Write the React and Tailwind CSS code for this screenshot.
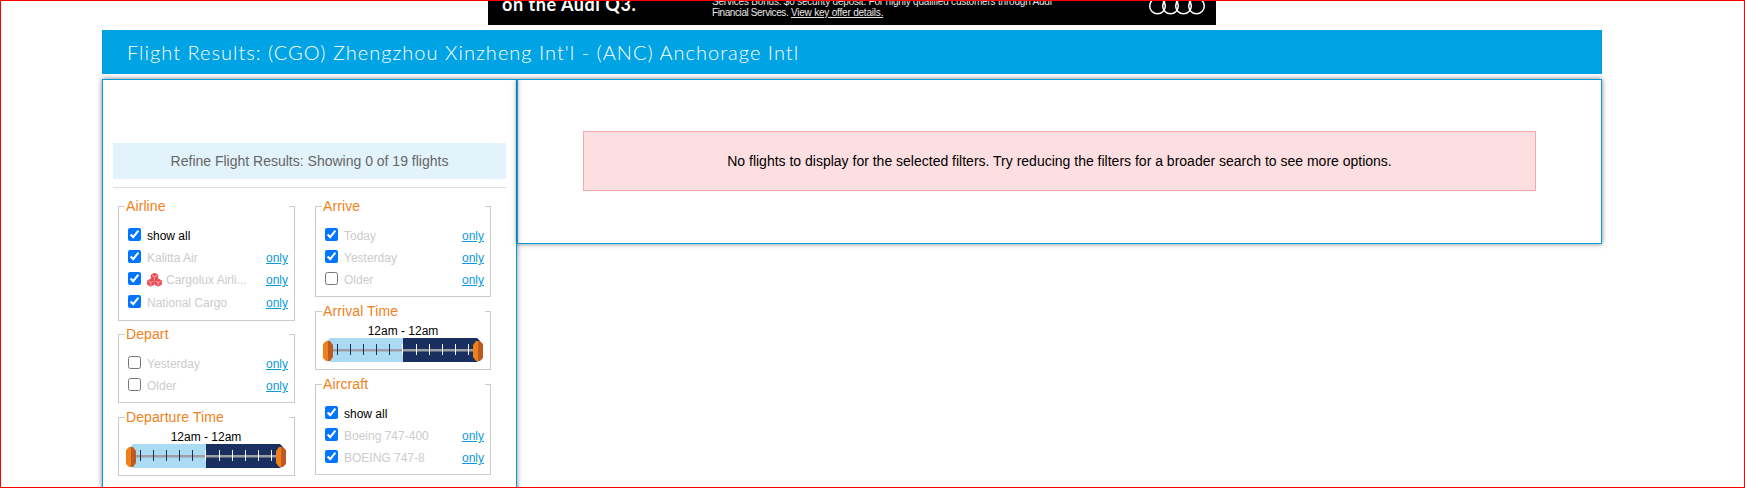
const FONT = { fontFamily: '"Liberation Sans", Arial, sans-serif' };

function CargoluxLogo() {
  const cells = [
    [7.5, 3.8],
    [3.8, 9.6],
    [11.2, 9.6],
  ];
  return (
    <svg width="15" height="14" viewBox="0 0 15 14" className="-mt-[1px] shrink-0">
      {cells.map(([x, y]) => (
        <g key={x + "-" + y} transform={"translate(" + x + " " + y + ")"}>
          <polygon points="0,-3.7 3.3,-1.9 3.3,1.9 0,3.7 -3.3,1.9 -3.3,-1.9" fill="#ee4a53" stroke="#e0323c" strokeWidth="0.6" />
          <path d="M0 0V3M0 0L-2.4 -1.4M0 0L2.4 -1.4" stroke="#fbd0d2" strokeWidth="0.8" fill="none" />
        </g>
      ))}
    </svg>
  );
}

function Row({ label, checked, dim = true, only = true, logo, className = "" }) {
  return (
    <div className={"flex items-center h-[22px] " + className}>
      <input type="checkbox" checked={checked} readOnly className="w-[13px] h-[13px] m-0 ml-[9px] -mt-[4px] shrink-0" />
      <span className={"ml-[6px] flex items-center gap-[4px] text-[12px] " + (dim ? "text-[#cccccc]" : "text-black")}>
        {logo && <CargoluxLogo />}
        {label}
      </span>
      {only && <a className="ml-auto mr-[6px] text-[12px] text-[#0a9bdc] underline">only</a>}
    </div>
  );
}

function Box({ title, className = "", children }) {
  return (
    <fieldset className={"border border-[#cccccc] px-0 " + className}>
      <legend className="ml-[6px] w-[calc(100%-11px)] px-[1px] text-[14px] leading-[17px] tracking-[0.1px] text-[#f08118]">{title}</legend>
      {children}
    </fieldset>
  );
}

function TimeSlider() {
  const darkTicks = [0, 14, 27, 40, 53, 66];
  const lightTicks = [14, 27, 40, 53, 66];
  return (
    <div className="ml-[7px] flex w-[160px] flex-col items-center pt-[4px]">
      <div className="text-[12px] leading-[14px] text-black">12am - 12am</div>
      <svg width="160" height="24" viewBox="0 0 160 24">
        <path d="M7 0H80V24H7L4 21V3Z" fill="#abdbf2" />
        <path d="M80 0H154L157 3V21L154 24H80Z" fill="#182f5f" />
        <rect x="9" y="11" width="141" height="2.5" fill="#9c9fa3" />
        {lightTicks.map((x) => (
          <rect key={x} x={x} y="6" width="1" height="11" fill="#182f5f" />
        ))}
        {darkTicks.map((x) => (
          <rect key={x} x={x + 79} y="6" width="1" height="11" fill="#ffffff" />
        ))}
        <path d="M0 6L3 3H5V23H3L0 20Z" fill="#f08118" />
        <path d="M5 3H7L10 7V19L7 23H5Z" fill="#bd5a24" />
        <path d="M150 7L153 3H155V23H153L150 19Z" fill="#f08118" />
        <path d="M155 3H157L160 6V20L157 23H155Z" fill="#bd5a24" />
      </svg>
    </div>
  );
}

export default function App() {
  return (
    <div style={FONT} className="h-[488px] overflow-hidden border border-[#ff0000] bg-white pl-[101px]">
      <div className="w-[1500px]">
        {/* ===== Ad banner, cut off at the top ===== */}
        <div className="mx-auto flex h-[24px] w-[728px] items-start overflow-hidden bg-black text-white">
          <div className="ml-[14px] -mt-[7px] w-[210px] shrink-0 text-[18px] font-bold leading-[20px] tracking-[0.55px]" style={{ fontFamily: "Lato, sans-serif" }}>
            on the Audi Q3.
          </div>
          <div className="-mt-[5px] w-[340px] shrink-0 text-[10px] leading-[11px] tracking-[-0.2px] text-[#e8e8e8]">
            <div className="whitespace-nowrap">Services Bonus. $0 security deposit. For highly qualified customers through Audi</div>
            <div className="whitespace-nowrap">
              <span className="tracking-[-0.4px]">Financial Services.</span> <span className="underline">View key offer details.</span>
            </div>
          </div>
          <svg width="60" height="24" viewBox="0 0 60 24" fill="none" stroke="#fff" strokeWidth="1.5" className="ml-auto mr-[9px] shrink-0">
            <circle cx="10.5" cy="5" r="7.8" />
            <circle cx="23.5" cy="5" r="7.8" />
            <circle cx="36.5" cy="5" r="7.8" />
            <circle cx="49.5" cy="5" r="7.8" />
          </svg>
        </div>

        {/* ===== Title bar ===== */}
        <div className="mt-[5px] flex h-[44px] items-center bg-[#00a3e4] pl-[25px] text-[20px] font-light tracking-[1.02px] text-white" style={{ fontFamily: "Lato, sans-serif" }}>
          Flight Results: (CGO) Zhengzhou Xinzheng Int'l - (ANC) Anchorage Intl
        </div>

        <div className="mt-[5px] flex items-start">
          {/* ===== Filters ===== */}
          <div className="h-[420px] w-[415px] shrink-0 border border-[#0a9bdc] pl-[10px] pt-[63px] shadow-[0_0_5px_rgba(0,0,0,0.5)]">
            <div className="flex h-[36px] w-[393px] items-center justify-center bg-[#e2f3fb] text-[14px] text-[#666666]">
              Refine Flight Results: Showing 0 of 19 flights
            </div>
            <div className="mt-[8px] h-px w-[393px] bg-[#dddddd]" />
            <div className="mt-[10px] flex items-start pl-[5px]">
              <div className="flex w-[177px] flex-col">
                <Box title="Airline" className="h-[123px] pt-[10px]">
                  <Row label="show all" checked dim={false} only={false} />
                  <Row label="Kalitta Air" checked />
                  <Row label="Cargolux Airli..." checked logo />
                  <Row label="National Cargo" checked className="mt-[1px]" />
                </Box>
                <Box title="Depart" className="mt-[5px] h-[77px] pt-[10px]">
                  <Row label="Yesterday" checked={false} />
                  <Row label="Older" checked={false} />
                </Box>
                <Box title="Departure Time" className="mt-[6px] h-[67px]">
                  <TimeSlider />
                </Box>
              </div>
              <div className="ml-[20px] flex w-[176px] flex-col">
                <Box title="Arrive" className="h-[99px] pt-[10px]">
                  <Row label="Today" checked />
                  <Row label="Yesterday" checked />
                  <Row label="Older" checked={false} />
                </Box>
                <Box title="Arrival Time" className="mt-[6px] h-[67px]">
                  <TimeSlider />
                </Box>
                <Box title="Aircraft" className="mt-[6px] h-[99px] pt-[10px]">
                  <Row label="show all" checked dim={false} only={false} />
                  <Row label="Boeing 747-400" checked />
                  <Row label="BOEING 747-8" checked />
                </Box>
              </div>
            </div>
          </div>

          {/* ===== Results ===== */}
          <div className="h-[165px] flex-1 border border-[#0a9bdc] pl-[65px] pt-[51px] shadow-[0_0_5px_rgba(0,0,0,0.5)]">
            <div className="flex h-[60px] w-[953px] items-center justify-center border border-[#f5a9ae] bg-[#fedfe1] text-[14px] text-black">
              No flights to display for the selected filters. Try reducing the filters for a broader search to see more options.
            </div>
          </div>
        </div>
      </div>
    </div>
  );
}
